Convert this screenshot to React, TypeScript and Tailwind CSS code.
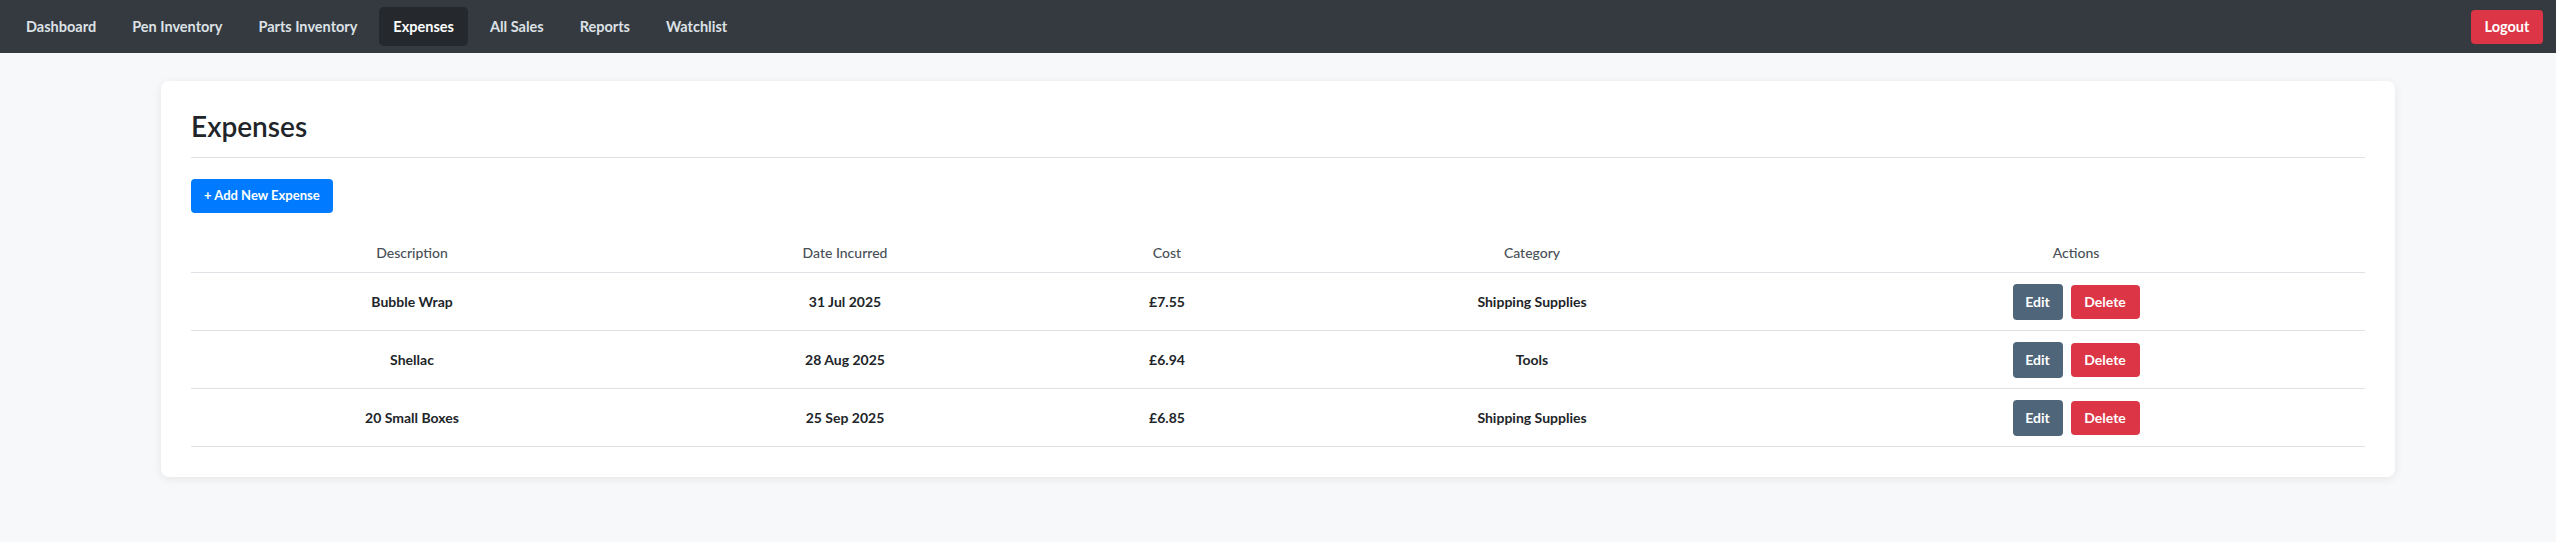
const navItems = ["Dashboard", "Pen Inventory", "Parts Inventory", "Expenses", "All Sales", "Reports", "Watchlist"]

const expenses = [
    { description: "Bubble Wrap", date: "31 Jul 2025", cost: "£7.55", category: "Shipping Supplies" },
    { description: "Shellac", date: "28 Aug 2025", cost: "£6.94", category: "Tools" },
    { description: "20 Small Boxes", date: "25 Sep 2025", cost: "£6.85", category: "Shipping Supplies" },
]

const cols = "grid grid-cols-[442px_424px_220px_510px_1fr] items-center text-center"

export default function App() {
    return (
        <div className="min-h-screen bg-[#f7f8fa] font-['Lato','Liberation_Sans',sans-serif] text-[14px] text-[#212529]">
            <nav className="h-[53px] bg-[#343a40] flex items-center justify-between pl-[12px] pr-[13px]">
                <div className="flex items-center gap-[8px]">
                    {navItems.map((item) => (
                        <a
                            key={item}
                            href="#"
                            className={
                                item === "Expenses"
                                    ? "h-[39px] px-[14px] flex items-center rounded-[5px] bg-[#25282d] text-white text-[14.5px] font-bold"
                                    : "h-[39px] px-[14px] flex items-center rounded-[5px] text-[#dde1e6] text-[14.5px] font-bold"
                            }
                        >
                            {item}
                        </a>
                    ))}
                </div>
                <button className="h-[34px] w-[72px] rounded-[4px] bg-[#dc3545] text-white text-[14.5px] font-bold">Logout</button>
            </nav>

            <main className="pt-[28px]">
                <div className="mx-auto w-[2234px] bg-white rounded-[8px] shadow-[0_2px_10px_rgba(0,0,0,0.08)] p-[30px]">
                    <h1 className="text-[28px] leading-[30px] font-semibold text-[#212529] pb-[16px] border-b border-[#dee2e6]">Expenses</h1>

                    <button className="mt-[21px] h-[34px] px-[13px] rounded-[4px] bg-[#007bff] text-white text-[13px] font-bold">+ Add New Expense</button>

                    <div className="mt-[20px]">
                        <div className={`${cols} h-[40px] border-b border-[#dee2e6] text-[#495057] font-medium`}>
                            <div>Description</div>
                            <div>Date Incurred</div>
                            <div>Cost</div>
                            <div>Category</div>
                            <div>Actions</div>
                        </div>
                        {expenses.map((e) => (
                            <div key={e.description} className={`${cols} h-[58px] border-b border-[#dee2e6] font-bold`}>
                                <div>{e.description}</div>
                                <div>{e.date}</div>
                                <div>{e.cost}</div>
                                <div>{e.category}</div>
                                <div className="flex items-center justify-center gap-[8px]">
                                    <button className="h-[36px] w-[50px] rounded-[4px] bg-[#4e657a] text-white text-[14px] font-bold">Edit</button>
                                    <button className="h-[34px] w-[69px] rounded-[4px] bg-[#dc3545] text-white text-[14px] font-bold">Delete</button>
                                </div>
                            </div>
                        ))}
                    </div>
                </div>
            </main>
        </div>
    )
}
